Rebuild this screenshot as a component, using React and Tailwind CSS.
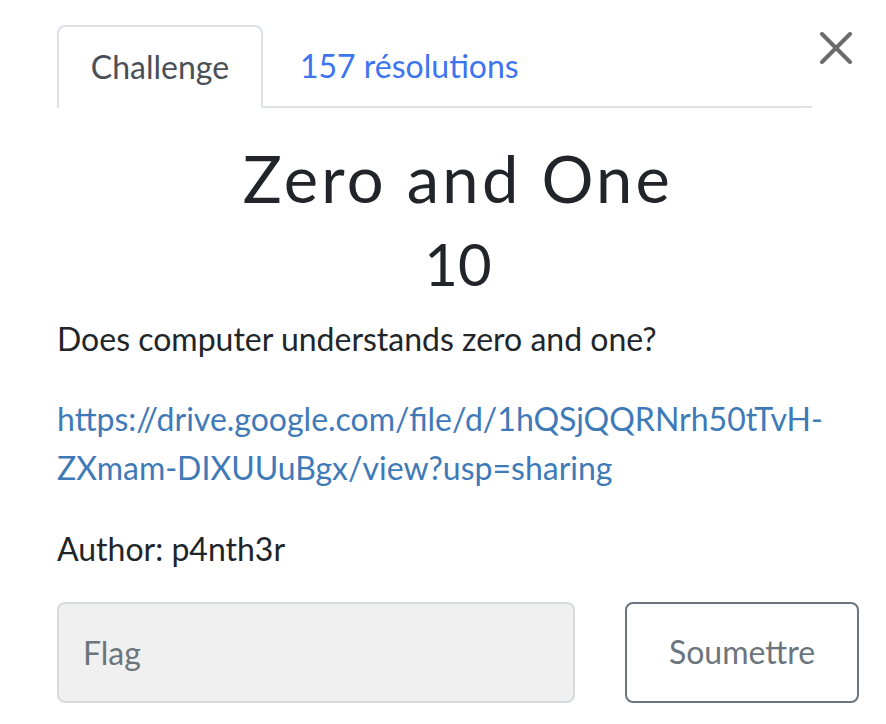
export default function App() {
  return (
    <div
      className="w-[886px] h-[724px] bg-white text-[#212529] overflow-hidden"
      style={{ fontFamily: 'Lato, "Noto Sans", sans-serif' }}
    >
      <div className="flex items-start pl-[57px] pt-[25px]">
        <ul className="flex w-[755px] border-b-2 border-[#dee2e6]">
          <li className="-mb-[2px] flex h-[83px] w-[206px] items-center justify-center rounded-t-[8px] border-2 border-b-0 border-[#dee2e6] bg-white pb-[2px] text-[32px] text-[#495057]">
            Challenge
          </li>
          <li className="flex h-[81px] items-center px-[37px] text-[32px] text-[#3d74f0]">
            157 résolutions
          </li>
        </ul>
        <button className="ml-[8px] mt-[7px] h-[32px] w-[32px] text-[#6c6c6c]">
          <svg viewBox="0 0 32 32" className="h-[32px] w-[32px]" fill="none" stroke="currentColor" strokeWidth="4" strokeLinecap="round">
            <path d="M2 2 L30 30 M30 2 L2 30" />
          </svg>
        </button>
      </div>

      <div className="pl-[57px] pr-[27px]">
        <h3 className="mt-[31px] text-center text-[65px] leading-[1.2] tracking-[0.05em]">Zero and One</h3>
        <h4 className="mt-[12px] text-center text-[58px] leading-[1.2]">10</h4>
        <div className="mt-[15px] text-[32px] leading-[49px]">
          <p>Does computer understands zero and one?</p>
          <p className="mt-[31px] break-all pr-[20px]">
            <a className="text-[#3f7ab8]" href="#">
              https://drive.google.com/file/d/1hQSjQQRNrh50tTvH-ZXmam-DIXUUuBgx/view?usp=sharing
            </a>
          </p>
          <p className="mt-[32px]">Author: p4nth3r</p>
        </div>
        <div className="mt-[29px] flex">
          <input
            className="h-[101px] w-[518px] rounded-[8px] border-2 border-[#d8dbde] bg-[#f0f0f0] px-[24px] text-[32px] text-[#6c757d] placeholder-[#6c757d] outline-none"
            placeholder="Flag"
            style={{ fontFamily: 'Lato, "Noto Sans", sans-serif' }}
          />
          <button className="ml-[50px] h-[101px] w-[234px] rounded-[8px] border-2 border-[#6c757d] bg-white text-[32px] text-[#6c757d]">
            Soumettre
          </button>
        </div>
      </div>
    </div>
  )
}
